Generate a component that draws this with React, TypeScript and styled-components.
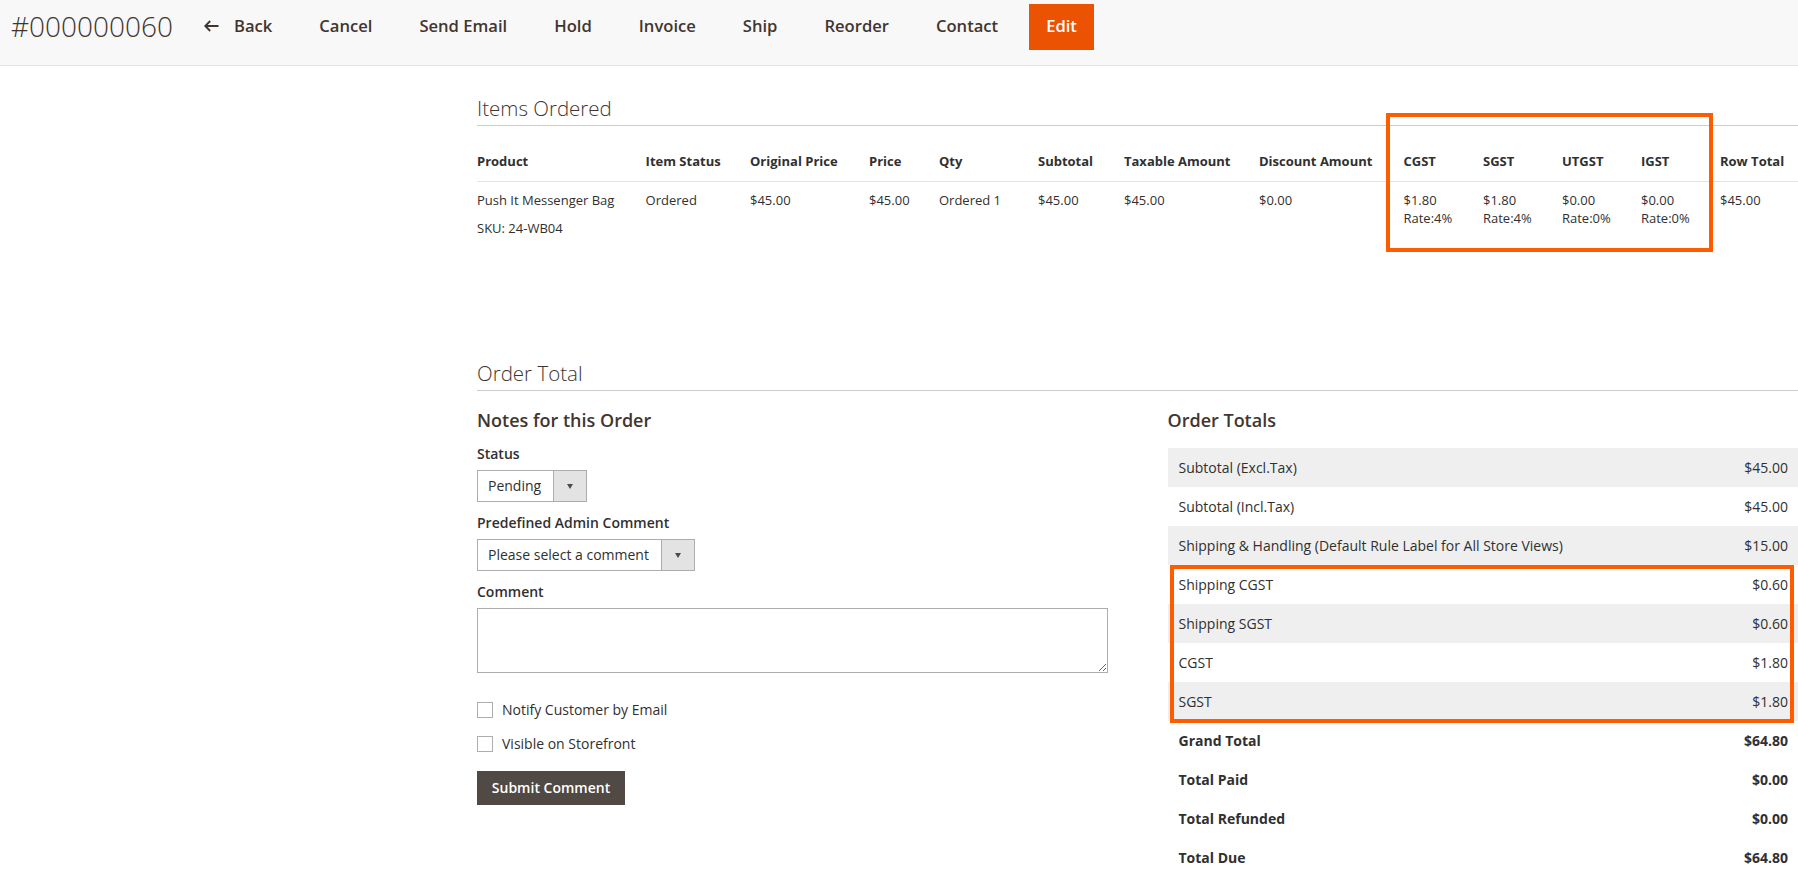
import React from "react";
import styled, { createGlobalStyle } from "styled-components";

const GlobalStyle = createGlobalStyle`
  html, body {
    margin: 0;
    padding: 0;
    background: #ffffff;
  }
  body {
    font-family: "Open Sans", "Liberation Sans", sans-serif;
    color: #303030;
    font-size: 14px;
  }
  * { box-sizing: border-box; }
`;

const Header = styled.header`
  height: 66px;
  background: #f8f8f8;
  border-bottom: 1px solid #e3e3e3;
  display: flex;
  align-items: flex-start;
  gap: 15px;
  padding: 4px 0 0 11px;
`;

const PageTitle = styled.h1`
  margin: 0;
  font-size: 28px;
  font-weight: 300;
  line-height: 44px;
  color: #41362f;
  white-space: nowrap;
`;

const Actions = styled.nav`
  display: flex;
  align-items: flex-start;
  gap: 15px;
`;

const ActionButton = styled.button<{ $primary?: boolean }>`
  font-family: inherit;
  font-size: 16.6px;
  font-weight: 600;
  line-height: 44px;
  padding: 0 ${(p) => (p.$primary ? "17px" : "16px")} 2px;
  border: none;
  display: flex;
  align-items: center;
  gap: 15px;
  cursor: pointer;
  white-space: nowrap;
  background: ${(p) => (p.$primary ? "#eb5202" : "transparent")};
  color: ${(p) => (p.$primary ? "#ffffff" : "#41362f")};
`;

const Main = styled.main`
  padding-left: 477px;
`;

const Section = styled.section`
  position: relative;
`;

const ItemsSection = styled(Section)`
  padding-top: 30px;
`;

const SectionTitle = styled.h2`
  margin: 0;
  font-size: 20.5px;
  font-weight: 300;
  line-height: 24px;
  color: #41362f;
  padding-bottom: 5px;
  border-bottom: 1px solid #cccccc;
`;

const ItemsTable = styled.table`
  width: 100%;
  border-collapse: collapse;
  table-layout: fixed;
`;

const HeadCell = styled.th`
  text-align: left;
  font-size: 13px;
  font-weight: 700;
  line-height: 18px;
  color: #303030;
  padding: 26px 0 11px;
  border-bottom: 1px solid #e3e3e3;
  white-space: nowrap;
`;

const BodyCell = styled.td`
  text-align: left;
  vertical-align: top;
  font-size: 13px;
  line-height: 18px;
  color: #303030;
  padding: 9px 0;
  white-space: nowrap;
`;

const Sku = styled.div`
  margin-top: 10px;
`;

const Highlight = styled.div`
  position: absolute;
  border: 4px solid #ff5c00;
  pointer-events: none;
`;

const OrderSection = styled(Section)`
  margin-top: 115px;
`;

const Columns = styled.div`
  display: grid;
  grid-template-columns: 1fr 1fr;
  column-gap: 60px;
`;

const Column = styled.div`
  display: flex;
  flex-direction: column;
  align-items: flex-start;
`;

const ColumnTitle = styled.h3`
  margin: 18px 0 14px;
  font-size: 18px;
  font-weight: 600;
  line-height: 22px;
  color: #41362f;
`;

const Field = styled.div<{ $full?: boolean }>`
  display: flex;
  flex-direction: column;
  align-items: flex-start;
  margin-bottom: 12px;
  width: ${(p) => (p.$full ? "100%" : "auto")};
`;

const FieldLabel = styled.label`
  font-size: 14px;
  font-weight: 600;
  line-height: 18px;
  color: #303030;
  margin-bottom: 7px;
`;

const SelectBox = styled.div`
  display: flex;
  height: 32px;
  border: 1px solid #adadad;
  background: #ffffff;
`;

const SelectValue = styled.span`
  font-size: 14px;
  line-height: 30px;
  padding: 0 12px 0 10px;
  color: #303030;
  white-space: nowrap;
`;

const SelectArrow = styled.span`
  width: 33px;
  background: #e3e3e3;
  border-left: 1px solid #adadad;
  display: flex;
  align-items: center;
  justify-content: center;

  &::after {
    content: "";
    width: 0;
    height: 0;
    border-left: 3.5px solid transparent;
    border-right: 3.5px solid transparent;
    border-top: 5px solid #514943;
  }
`;

const CommentArea = styled.textarea`
  width: 100%;
  height: 65px;
  border: 1px solid #adadad;
  font-family: inherit;
  font-size: 14px;
  padding: 6px 10px;
  display: block;
`;

const CheckRow = styled.label`
  display: flex;
  align-items: center;
  gap: 9px;
  font-size: 14px;
  line-height: 18px;
  color: #303030;
  margin-top: 16px;
`;

const CheckBox = styled.input`
  appearance: none;
  width: 16px;
  height: 16px;
  margin: 0;
  border: 1px solid #adadad;
  background: #ffffff;
`;

const SubmitButton = styled.button`
  margin-top: 18px;
  font-family: inherit;
  font-size: 14px;
  font-weight: 600;
  line-height: 18px;
  padding: 8px 14px;
  background: #514943;
  color: #ffffff;
  border: none;
  cursor: pointer;
  width: 148px;
  white-space: nowrap;
`;

const TotalsWrap = styled.div`
  position: relative;
  width: 100%;
  margin-top: 3px;
`;

const TotalsTable = styled.table`
  width: 100%;
  border-collapse: collapse;
`;

const TotalsRow = styled.tr<{ $shaded?: boolean }>`
  background: ${(p) => (p.$shaded ? "#efefef" : "transparent")};
`;

const TotalsCell = styled.td<{ $strong?: boolean; $amount?: boolean }>`
  height: 39px;
  padding: 0 10px 0 11px;
  font-size: 14px;
  line-height: 18px;
  font-weight: ${(p) => (p.$strong ? 700 : 400)};
  text-align: ${(p) => (p.$amount ? "right" : "left")};
  color: #303030;
  white-space: nowrap;
`;

const BackArrow = () => (
  <svg width="15" height="12" viewBox="0 0 15 12" fill="none">
    <path
      d="M6.2 1 L1.2 6 L6.2 11 M1.2 6 H14.5"
      stroke="#41362f"
      strokeWidth="1.8"
      strokeLinecap="butt"
      strokeLinejoin="miter"
    />
  </svg>
);

const columns = [
  { key: "product", label: "Product", width: 168.6 },
  { key: "status", label: "Item Status", width: 104.4 },
  { key: "original", label: "Original Price", width: 119 },
  { key: "price", label: "Price", width: 70 },
  { key: "qty", label: "Qty", width: 99 },
  { key: "subtotal", label: "Subtotal", width: 86 },
  { key: "taxable", label: "Taxable Amount", width: 135 },
  { key: "discount", label: "Discount Amount", width: 144.5 },
  { key: "cgst", label: "CGST", width: 79.5 },
  { key: "sgst", label: "SGST", width: 79 },
  { key: "utgst", label: "UTGST", width: 79 },
  { key: "igst", label: "IGST", width: 79 },
  { key: "rowtotal", label: "Row Total", width: 78 },
];

const taxes = [
  { amount: "$1.80", rate: "Rate:4%" },
  { amount: "$1.80", rate: "Rate:4%" },
  { amount: "$0.00", rate: "Rate:0%" },
  { amount: "$0.00", rate: "Rate:0%" },
];

const totals: { label: string; value: string; strong?: boolean }[] = [
  { label: "Subtotal (Excl.Tax)", value: "$45.00" },
  { label: "Subtotal (Incl.Tax)", value: "$45.00" },
  { label: "Shipping & Handling (Default Rule Label for All Store Views)", value: "$15.00" },
  { label: "Shipping CGST", value: "$0.60" },
  { label: "Shipping SGST", value: "$0.60" },
  { label: "CGST", value: "$1.80" },
  { label: "SGST", value: "$1.80" },
  { label: "Grand Total", value: "$64.80", strong: true },
  { label: "Total Paid", value: "$0.00", strong: true },
  { label: "Total Refunded", value: "$0.00", strong: true },
  { label: "Total Due", value: "$64.80", strong: true },
];

const actions = ["Cancel", "Send Email", "Hold", "Invoice", "Ship", "Reorder", "Contact"];

export default function App() {
  return (
    <>
      <GlobalStyle />
      <Header>
        <PageTitle>#000000060</PageTitle>
        <Actions>
          <ActionButton>
            <BackArrow />
            Back
          </ActionButton>
          {actions.map((a) => (
            <ActionButton key={a}>{a}</ActionButton>
          ))}
          <ActionButton $primary>Edit</ActionButton>
        </Actions>
      </Header>

      <Main>
        <ItemsSection>
          <SectionTitle>Items Ordered</SectionTitle>
          <ItemsTable>
            <colgroup>
              {columns.map((c) => (
                <col key={c.key} style={{ width: c.width }} />
              ))}
            </colgroup>
            <thead>
              <tr>
                {columns.map((c) => (
                  <HeadCell key={c.key}>{c.label}</HeadCell>
                ))}
              </tr>
            </thead>
            <tbody>
              <tr>
                <BodyCell>
                  <div>Push It Messenger Bag</div>
                  <Sku>SKU: 24-WB04</Sku>
                </BodyCell>
                <BodyCell>Ordered</BodyCell>
                <BodyCell>$45.00</BodyCell>
                <BodyCell>$45.00</BodyCell>
                <BodyCell>Ordered 1</BodyCell>
                <BodyCell>$45.00</BodyCell>
                <BodyCell>$45.00</BodyCell>
                <BodyCell>$0.00</BodyCell>
                {taxes.map((t, i) => (
                  <BodyCell key={i}>
                    <div>{t.amount}</div>
                    <div>{t.rate}</div>
                  </BodyCell>
                ))}
                <BodyCell>$45.00</BodyCell>
              </tr>
            </tbody>
          </ItemsTable>
          <Highlight style={{ left: 909, top: 47, width: 327, height: 139 }} />
        </ItemsSection>

        <OrderSection>
          <SectionTitle>Order Total</SectionTitle>
          <Columns>
            <Column>
              <ColumnTitle>Notes for this Order</ColumnTitle>
              <Field>
                <FieldLabel>Status</FieldLabel>
                <SelectBox>
                  <SelectValue>Pending</SelectValue>
                  <SelectArrow />
                </SelectBox>
              </Field>
              <Field>
                <FieldLabel>Predefined Admin Comment</FieldLabel>
                <SelectBox>
                  <SelectValue>Please select a comment</SelectValue>
                  <SelectArrow />
                </SelectBox>
              </Field>
              <Field $full>
                <FieldLabel>Comment</FieldLabel>
                <CommentArea />
              </Field>
              <CheckRow>
                <CheckBox type="checkbox" />
                Notify Customer by Email
              </CheckRow>
              <CheckRow>
                <CheckBox type="checkbox" />
                Visible on Storefront
              </CheckRow>
              <SubmitButton>Submit Comment</SubmitButton>
            </Column>

            <Column>
              <ColumnTitle>Order Totals</ColumnTitle>
              <TotalsWrap>
                <TotalsTable>
                  <tbody>
                    {totals.map((t, i) => (
                      <TotalsRow key={t.label} $shaded={!t.strong && i % 2 === 0}>
                        <TotalsCell $strong={t.strong}>{t.label}</TotalsCell>
                        <TotalsCell $strong={t.strong} $amount>
                          {t.value}
                        </TotalsCell>
                      </TotalsRow>
                    ))}
                  </tbody>
                </TotalsTable>
                <Highlight style={{ left: 2, top: 117, width: 624, height: 158 }} />
              </TotalsWrap>
            </Column>
          </Columns>
        </OrderSection>
      </Main>
    </>
  );
}
